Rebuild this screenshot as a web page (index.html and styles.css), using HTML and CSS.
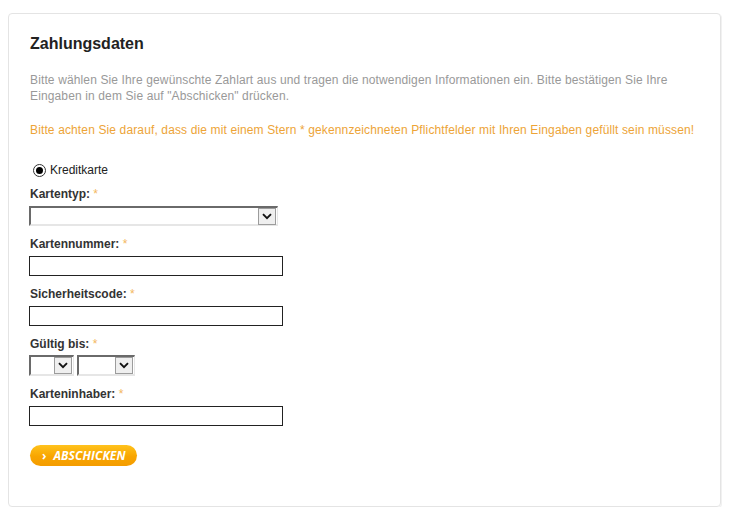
FILE: index.html
```html
<!DOCTYPE html>
<html lang="de">
<head>
<meta charset="utf-8">
<title>Zahlungsdaten</title>
<link rel="stylesheet" href="styles.css">
</head>
<body>
<div class="card">
  <h2 class="title">Zahlungsdaten</h2>
  <p class="intro">Bitte wählen Sie Ihre gewünschte Zahlart aus und tragen die notwendigen Informationen ein. Bitte bestätigen Sie Ihre Eingaben in dem Sie auf "Abschicken" drücken.</p>
  <p class="notice">Bitte achten Sie darauf, dass die mit einem Stern * gekennzeichneten Pflichtfelder mit Ihren Eingaben gefüllt sein müssen!</p>

  <div class="radio-row">
    <span class="radio"><span class="radio-dot"></span></span>
    <span class="radio-label">Kreditkarte</span>
  </div>

  <div class="field">
    <div class="label">Kartentyp: <span class="req">*</span></div>
    <div class="select select-wide">
      <span class="select-btn"><svg width="10" height="7" viewBox="0 0 10 7"><path d="M1 1.2 L5 5.2 L9 1.2" fill="none" stroke="#111" stroke-width="1.9"/></svg></span>
    </div>
  </div>

  <div class="field">
    <div class="label">Kartennummer: <span class="req">*</span></div>
    <div class="text-input"></div>
  </div>

  <div class="field">
    <div class="label">Sicherheitscode: <span class="req">*</span></div>
    <div class="text-input"></div>
  </div>

  <div class="field">
    <div class="label">Gültig bis: <span class="req">*</span></div>
    <div class="select-pair">
      <div class="select select-month">
        <span class="select-btn"><svg width="10" height="7" viewBox="0 0 10 7"><path d="M1 1.2 L5 5.2 L9 1.2" fill="none" stroke="#111" stroke-width="1.9"/></svg></span>
      </div>
      <div class="select select-year">
        <span class="select-btn"><svg width="10" height="7" viewBox="0 0 10 7"><path d="M1 1.2 L5 5.2 L9 1.2" fill="none" stroke="#111" stroke-width="1.9"/></svg></span>
      </div>
    </div>
  </div>

  <div class="field">
    <div class="label">Karteninhaber: <span class="req">*</span></div>
    <div class="text-input"></div>
  </div>

  <div class="button"><span class="button-arrow">›</span><span class="button-text">ABSCHICKEN</span></div>
</div>
</body>
</html>
```

FILE: styles.css
```css
html, body {
  margin: 0;
  padding: 0;
  background: #fff;
}

body {
  font-family: "Liberation Sans", Arial, sans-serif;
  font-size: 12px;
  color: #333;
}

.card {
  margin: 13px 10px 0 8px;
  border: 1px solid #e4e4e4;
  border-radius: 4px;
  box-shadow: 1px 1px 0 #f1f1f1;
  padding: 20px 20px 40px 21px;
}

.title {
  margin: 0;
  font-size: 16px;
  line-height: 20px;
  font-weight: bold;
  color: #222;
}

.intro {
  margin: 18px 0 0;
  line-height: 16px;
  color: #999;
  letter-spacing: 0.13px;
}

.notice {
  margin: 18px 0 0;
  line-height: 16px;
  color: #eda437;
  letter-spacing: 0.13px;
}

.radio-row {
  margin-top: 24px;
  display: flex;
  align-items: center;
  height: 16px;
  padding-left: 3px;
}

.radio {
  width: 11px;
  height: 11px;
  border: 1px solid #333;
  border-radius: 50%;
  display: flex;
  align-items: center;
  justify-content: center;
  margin-right: 4px;
  background: #fff;
}

.radio-dot {
  width: 7px;
  height: 7px;
  border-radius: 50%;
  background: #000;
}

.radio-label {
  line-height: 16px;
  color: #222;
}

.field {
  margin-top: 9px;
  display: flex;
  flex-direction: column;
  align-items: flex-start;
}

.field + .field {
  margin-top: 11px;
}

.label {
  font-weight: bold;
  line-height: 14px;
  color: #333;
  margin-bottom: 5px;
}

.req {
  color: #f3b760;
  font-weight: normal;
}

.text-input {
  box-sizing: border-box;
  width: 254px;
  height: 20px;
  border: 1px solid #222;
  background: #fff;
  margin-left: -1px;
}

.select {
  box-sizing: border-box;
  height: 20px;
  border-top: 2px solid #6a6a6a;
  border-left: 2px solid #6a6a6a;
  border-right: 1px solid #e6e6e6;
  border-bottom: 2px solid #e6e6e6;
  background: #fff;
  display: flex;
  justify-content: flex-end;
  align-items: center;
  padding-right: 1px;
  margin-left: -1px;
}

.select-wide {
  width: 249px;
}

.select-pair {
  display: flex;
  gap: 4px;
  margin-top: -1px;
}

.select-month {
  width: 45px;
  height: 21px;
}

.select-year {
  width: 58px;
  height: 21px;
}

.select-btn {
  box-sizing: border-box;
  width: 18px;
  height: 17px;
  border: 1px solid #9c9c9c;
  background: #efefef;
  display: flex;
  align-items: center;
  justify-content: center;
}

.select-btn svg {
  display: block;
}

.button {
  margin-top: 19px;
  width: 107px;
  height: 21px;
  border-radius: 11px;
  background: linear-gradient(#ffc21c, #f8a500 55%, #f49c00);
  display: flex;
  align-items: center;
  padding-left: 12px;
  box-sizing: border-box;
  color: #fff;
  font-family: "Open Sans", sans-serif;
  font-weight: bold;
  font-style: italic;
  font-size: 12px;
}

.button-arrow {
  font-style: normal;
  font-size: 12px;
  margin-right: 7px;
  line-height: 1;
}

.button-text {
  line-height: 1;
  letter-spacing: 0.1px;
}
```
